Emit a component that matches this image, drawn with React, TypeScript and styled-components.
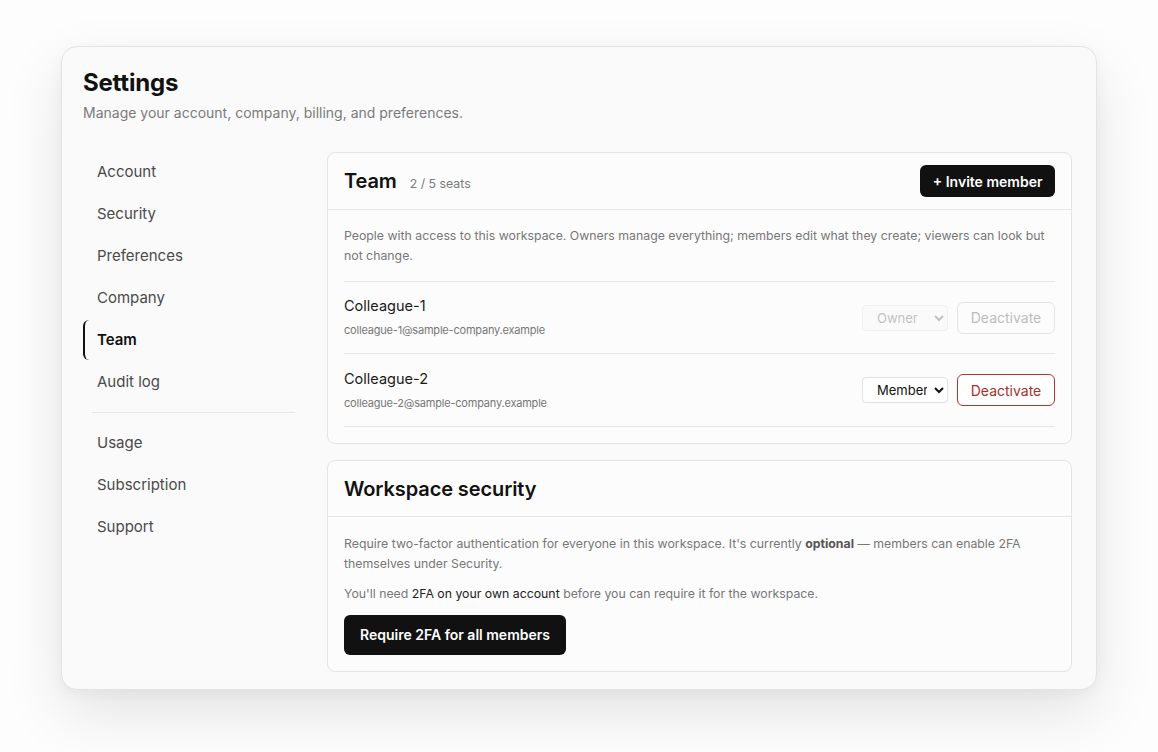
import React from "react";
import styled, { createGlobalStyle } from "styled-components";

type Member = {
  name: string;
  email: string;
  role: string;
  locked: boolean;
};

const members: Member[] = [
  { name: "Colleague-1", email: "colleague-1@sample-company.example", role: "Owner", locked: true },
  { name: "Colleague-2", email: "colleague-2@sample-company.example", role: "Member", locked: false },
];

const navTop = ["Account", "Security", "Preferences", "Company", "Team", "Audit log"];
const navBottom = ["Usage", "Subscription", "Support"];

const GlobalStyle = createGlobalStyle`
  html, body {
    margin: 0;
    background: #fdfdfd;
    font-family: Inter, "Noto Sans", "Liberation Sans", sans-serif;
    color: #111;
  }
  * {
    box-sizing: border-box;
  }
`;

const Page = styled.div`
  width: 1158px;
  height: 752px;
  padding: 46px 61px 0;
  overflow: hidden;
`;

const Shell = styled.main`
  height: 644px;
  background: #fafafa;
  border: 1px solid #e3e3e3;
  border-radius: 16px;
  box-shadow: 0 24px 60px rgba(0, 0, 0, 0.1), 0 4px 14px rgba(0, 0, 0, 0.04);
  padding: 21px 24px 18px 21px;
  display: flex;
  flex-direction: column;
`;

const Title = styled.h1`
  margin: 0;
  font-size: 24px;
  line-height: 30px;
  font-weight: 700;
  letter-spacing: -0.2px;
`;

const Subtitle = styled.p`
  margin: 5px 0 0;
  font-size: 14px;
  line-height: 20px;
  color: #7a7a7a;
`;

const Body = styled.div`
  display: grid;
  grid-template-columns: 220px 1fr;
  gap: 24px;
  margin-top: 29px;
`;

const Nav = styled.nav`
  display: flex;
  flex-direction: column;
  gap: 2px;
`;

const NavItem = styled.a<{ $active?: boolean }>`
  display: block;
  height: 40px;
  line-height: 40px;
  padding-left: 12px;
  font-size: 15px;
  color: ${({ $active }) => ($active ? "#111" : "#4a4a4a")};
  font-weight: ${({ $active }) => ($active ? 600 : 400)};
  border-left: 2px solid ${({ $active }) => ($active ? "#111" : "transparent")};
  border-radius: 6px;
  text-decoration: none;
  cursor: pointer;
`;

const NavDivider = styled.hr`
  border: none;
  border-top: 1px solid #e6e6e6;
  margin: 8px 8px 8px 9px;
`;

const Content = styled.div`
  display: flex;
  flex-direction: column;
  gap: 16px;
`;

const Section = styled.section`
  background: #fcfcfc;
  border: 1px solid #e4e4e4;
  border-radius: 8px;
`;

const SectionHead = styled.header<{ $tall?: boolean }>`
  display: flex;
  align-items: center;
  justify-content: space-between;
  height: ${({ $tall }) => ($tall ? "57px" : "56px")};
  padding: 0 16px;
  border-bottom: 1px solid #e8e8e8;
`;

const HeadTitle = styled.div`
  display: flex;
  align-items: baseline;
  gap: 13px;
`;

const SectionTitle = styled.h2`
  margin: 0;
  font-size: 20px;
  font-weight: 600;
  letter-spacing: -0.1px;
`;

const Seats = styled.span`
  font-size: 12.3px;
  color: #7a7a7a;
`;

const DarkButton = styled.button<{ $size?: "sm" | "lg" }>`
  height: ${({ $size }) => ($size === "lg" ? "40px" : "32px")};
  padding: ${({ $size }) => ($size === "lg" ? "0 16px" : "0 12.5px")};
  background: #111;
  color: #fff;
  border: none;
  border-radius: 6px;
  font-family: inherit;
  font-size: 14px;
  font-weight: 600;
  cursor: pointer;
`;

const SectionBody = styled.div`
  padding: 16px;
`;

const Note = styled.p<{ $gap?: number }>`
  margin: 0 0 ${({ $gap }) => $gap ?? 11}px;
  font-size: 12.3px;
  line-height: 19.5px;
  color: #777;

  b {
    font-weight: 700;
    color: #555;
  }

  em {
    font-style: normal;
    color: #222;
  }
`;

const MemberList = styled.ul`
  list-style: none;
  margin: 16px 0 0;
  padding: 0;
  border-bottom: 1px solid #e8e8e8;
`;

const MemberRow = styled.li`
  display: flex;
  align-items: center;
  justify-content: space-between;
  height: 72px;
  border-top: 1px solid #e8e8e8;

  &:last-child {
    height: 73px;
  }
`;

const MemberInfo = styled.div`
  display: flex;
  flex-direction: column;
  gap: 8px;
  margin-top: -1px;
`;

const MemberName = styled.span`
  font-size: 14.5px;
  line-height: 18px;
  color: #1a1a1a;
`;

const MemberEmail = styled.span`
  font-size: 11px;
  line-height: 14px;
  color: #777;
  letter-spacing: -0.2px;
`;

const Actions = styled.div`
  display: flex;
  align-items: center;
  gap: 9px;
`;

const RoleSelect = styled.select`
  width: 86px;
  height: 26px;
  padding: 0 4px 0 10px;
  border: 1px solid #e2e2e2;
  border-radius: 4px;
  background: #fff;
  font-family: inherit;
  font-size: 13px;
  color: #111;

  &:disabled {
    color: #aaa;
    background: #fafafa;
    border-color: #ececec;
  }
`;

const DangerButton = styled.button`
  height: 32px;
  width: 98px;
  border: 1px solid #b3362c;
  border-radius: 6px;
  background: #fff;
  color: #a8302a;
  font-family: inherit;
  font-size: 14px;
  cursor: pointer;

  &:disabled {
    color: #bdbdbd;
    border-color: #e4e4e4;
    background: #fcfcfc;
    cursor: default;
  }
`;

const SecurityBody = styled(SectionBody)`
  padding-top: 17px;
`;

export default function App() {
  return (
    <Page>
      <GlobalStyle />
      <Shell>
        <Title>Settings</Title>
        <Subtitle>Manage your account, company, billing, and preferences.</Subtitle>
        <Body>
          <Nav>
            {navTop.map((item) => (
              <NavItem key={item} $active={item === "Team"}>
                {item}
              </NavItem>
            ))}
            <NavDivider />
            {navBottom.map((item) => (
              <NavItem key={item}>{item}</NavItem>
            ))}
          </Nav>
          <Content>
            <Section>
              <SectionHead $tall>
                <HeadTitle>
                  <SectionTitle>Team</SectionTitle>
                  <Seats>2 / 5 seats</Seats>
                </HeadTitle>
                <DarkButton>+ Invite member</DarkButton>
              </SectionHead>
              <SectionBody>
                <Note $gap={0}>
                  People with access to this workspace. Owners manage everything; members edit what they
                  create; viewers can look but not change.
                </Note>
                <MemberList>
                  {members.map((m) => (
                    <MemberRow key={m.email}>
                      <MemberInfo>
                        <MemberName>{m.name}</MemberName>
                        <MemberEmail>{m.email}</MemberEmail>
                      </MemberInfo>
                      <Actions>
                        <RoleSelect defaultValue={m.role} disabled={m.locked}>
                          <option>Owner</option>
                          <option>Member</option>
                          <option>Viewer</option>
                        </RoleSelect>
                        <DangerButton disabled={m.locked}>Deactivate</DangerButton>
                      </Actions>
                    </MemberRow>
                  ))}
                </MemberList>
              </SectionBody>
            </Section>
            <Section>
              <SectionHead>
                <SectionTitle>Workspace security</SectionTitle>
              </SectionHead>
              <SecurityBody>
                <Note>
                  Require two-factor authentication for everyone in this workspace. It's currently{" "}
                  <b>optional</b> — members can enable 2FA themselves under Security.
                </Note>
                <Note $gap={11}>
                  You'll need <em>2FA on your own account</em> before you can require it for the workspace.
                </Note>
                <DarkButton $size="lg">Require 2FA for all members</DarkButton>
              </SecurityBody>
            </Section>
          </Content>
        </Body>
      </Shell>
    </Page>
  );
}
